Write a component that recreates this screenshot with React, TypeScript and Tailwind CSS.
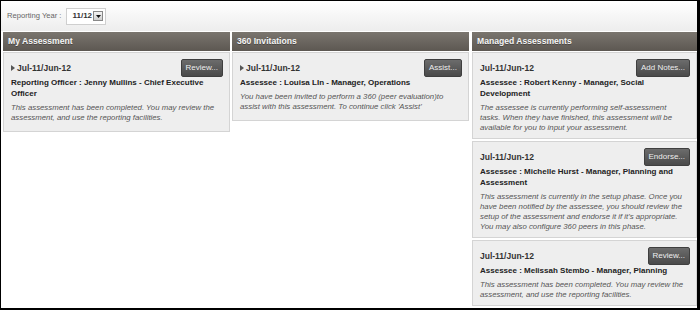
import React from 'react';

// 单条评估卡片
interface CardProps {
  date: string;
  arrow?: boolean;
  action: string;
  name: React.ReactNode;
  desc: React.ReactNode;
  tight?: boolean;
}

const Card: React.FC<CardProps> = ({ date, arrow, action, name, desc, tight }) => (
  <div className={`bg-[#eeeeee] border border-[#d4d4d4] pl-[7px] pr-[6px] pt-[6px] ${tight ? 'pb-[5px]' : 'pb-[8px]'}`}>
    <div className="flex items-center justify-between h-[18px]">
      <div className="flex items-center text-[8.5px] font-bold text-[#333]">
        {arrow && (
          <svg width="4" height="6" viewBox="0 0 4 6" className="mr-[2px]">
            <path d="M0 0 L4 3 L0 6 Z" fill="#555" />
          </svg>
        )}
        <span>{date}</span>
      </div>
      <button className="h-[18px] px-[4px] rounded-[2px] border border-[#3f3f3f] bg-linear-to-b from-[#6c6c6c] to-[#4a4a4a] text-[8px] text-[#eeeeee] leading-none">
        {action}
      </button>
    </div>
    <div className="text-[8px] leading-[11px] font-bold text-[#222] whitespace-nowrap">{name}</div>
    <div className="mt-[4px] text-[7.8px] leading-[10px] italic text-[#555] whitespace-nowrap">{desc}</div>
  </div>
);

// 栏目标题
const Header: React.FC<{ title: string }> = ({ title }) => (
  <div className="h-[19px] flex items-center pl-[5px] bg-linear-to-b from-[#7a756e] to-[#5d5852] text-[8.6px] font-bold text-[#f5f5f5] [text-shadow:0_1px_0_rgba(0,0,0,0.3)]">
    {title}
  </div>
);

export default function App() {
  return (
    <div
      className="w-[700px] h-[310px] box-border overflow-hidden bg-white border-t border-l border-r-[3px] border-b-2 border-black"
      style={{ fontFamily: '"Liberation Sans", Arial, sans-serif' }}
    >
      {/* 顶部：报告年度 */}
      <div className="h-[30px] flex items-center pl-[6px] bg-linear-to-b from-white to-[#ededed]">
        <span className="text-[7.6px] text-[#666]">Reporting Year :</span>
        <div className="ml-[5px] w-[40px] h-[17px] flex items-center justify-between pl-[5px] pr-[2px] bg-white border border-[#cfcfcf]">
          <span className="text-[8px] font-bold text-[#333]">11/12</span>
          <div className="w-[10px] h-[10px] flex items-center justify-center border border-[#888] bg-linear-to-b from-[#f4f4f4] to-[#cfcfcf]">
            <svg width="5" height="3" viewBox="0 0 5 3">
              <path d="M0 0 L5 0 L2.5 3 Z" fill="#111" />
            </svg>
          </div>
        </div>
      </div>

      <div className="flex items-start mt-[1px]">
        {/* 我的评估 */}
        <div className="w-[227px] ml-[2px] flex flex-col gap-[1px]">
          <Header title="My Assessment" />
          <Card
            arrow
            date="Jul-11/Jun-12"
            action="Review..."
            name={<>Reporting Officer : Jenny Mullins - Chief Executive<br />Officer</>}
            desc={<>This assessment has been completed. You may review the<br />assessment, and use the reporting facilities.</>}
          />
        </div>

        {/* 360 邀请 */}
        <div className="w-[237px] ml-[2px] flex flex-col gap-[1px]">
          <Header title="360 Invitations" />
          <Card
            arrow
            date="Jul-11/Jun-12"
            action="Assist..."
            name="Assessee : Louisa LIn - Manager, Operations"
            desc={<>You have been invited to perform a 360 (peer evaluation)to<br />assist with this assessment. To continue click 'Assist'</>}
          />
        </div>

        {/* 管理的评估 */}
        <div className="w-[225px] ml-[3px] flex flex-col gap-[1px]">
          <Header title="Managed Assessments" />
          <div className="flex flex-col gap-[2px]">
            <Card
              tight
              date="Jul-11/Jun-12"
              action="Add Notes..."
              name={<>Assessee : Robert Kenny - Manager, Social<br />Development</>}
              desc={<>The assessee is currently performing self-assessment<br />tasks. When they have finished, this assessment will be<br />available for you to input your assessment.</>}
            />
            <Card
              tight
              date="Jul-11/Jun-12"
              action="Endorse..."
              name={<>Assessee : Michelle Hurst - Manager, Planning and<br />Assessment</>}
              desc={<>This assessment is currently in the setup phase. Once you<br />have been notified by the assessee, you should review the<br />setup of the assessment and endorse it if it's appropriate.<br />You may also configure 360 peers in this phase.</>}
            />
            <Card
              tight
              date="Jul-11/Jun-12"
              action="Review..."
              name="Assessee : Melissah Stembo - Manager, Planning"
              desc={<>This assessment has been completed. You may review the<br />assessment, and use the reporting facilities.</>}
            />
          </div>
        </div>
      </div>
    </div>
  );
}
